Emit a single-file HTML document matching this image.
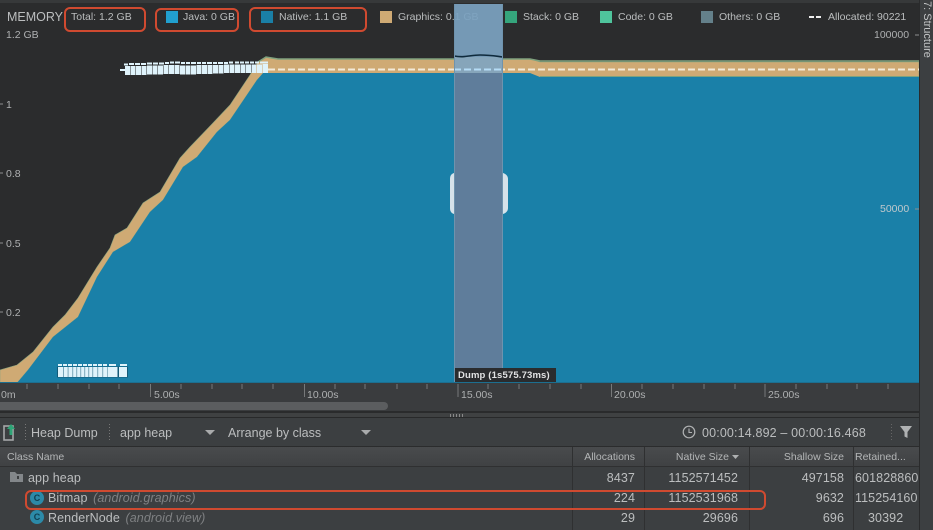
<!DOCTYPE html>
<html><head><meta charset="utf-8">
<style>
html,body{margin:0;padding:0;background:#2b2c2d;}
#r{position:relative;width:933px;height:530px;overflow:hidden;background:#2b2c2d;font-family:"Liberation Sans",sans-serif;color:#b4b6b7;}
.t{position:absolute;white-space:nowrap;line-height:14px;}
.b{position:absolute;}
.sw{position:absolute;top:11px;width:12px;height:12px;}
.l{font-size:10.5px;top:10px;color:#bbbdbe;}
.ax{font-size:10.5px;color:#aeb0b1;}
.row{font-size:12.5px;color:#bcbebf;letter-spacing:.1px;}
.n{text-align:right;}
.red{position:absolute;border:2.5px solid #d04a30;border-radius:5px;box-sizing:border-box;}
</style></head>
<body><div id="r">
<div class="b" style="left:0;top:0;width:933px;height:3px;background:#37393a;"></div>

<!-- legend (below the selection overlay) -->
<div class="t" style="left:7px;top:10px;font-size:12.5px;color:#bcbebf;">MEMORY</div>
<div class="t l" style="left:71px;">Total: 1.2 GB</div>
<div class="sw" style="left:166px;background:#21a0cf;"></div><div class="t l" style="left:183px;">Java: 0 GB</div>
<div class="sw" style="left:261px;background:#1a7fa6;"></div><div class="t l" style="left:279px;">Native: 1.1 GB</div>
<div class="sw" style="left:380px;background:#cfaa74;"></div><div class="t l" style="left:398px;">Graphics: 0.1 GB</div>
<div class="sw" style="left:505px;background:#35a57c;"></div><div class="t l" style="left:523px;">Stack: 0 GB</div>
<div class="sw" style="left:600px;background:#4fc49c;"></div><div class="t l" style="left:618px;">Code: 0 GB</div>
<div class="sw" style="left:701px;background:#64808a;"></div><div class="t l" style="left:719px;">Others: 0 GB</div>
<div class="b" style="left:809px;top:16px;width:5px;height:2px;background:#eee;"></div><div class="b" style="left:816px;top:16px;width:5px;height:2px;background:#eee;"></div>
<div class="t l" style="left:828px;">Allocated: 90221</div>

<svg class="b" style="left:0;top:0" width="933" height="420" viewBox="0 0 933 420">
<!-- tan -->
<path fill="#cfaa74" stroke="#8fa67f" stroke-width=".6" d="M0 370 L17 365 L33 352 L53 327 L65 315 L78 298 L97 267 L110 248 L115 235 L127 228 L143 203 L160 192 L180 158 L190 147 L213 123 L230 105 L250 75 L258 62 L266 57 L278 59 L530 59 L540 62 L919 62 L919 78 L540 78 L530 74 L263 74 L257 80 L230 120 L217 132 L197 157 L183 167 L163 200 L150 212 L130 242 L113 252 L97 277 L78 317 L53 337 L28 370 L17 383 L0 383Z"/>
<!-- green rim -->
<path fill="none" stroke="#7fa27e" stroke-width="1.5" d="M258 62 L266 57 L278 59 L530 59 L540 61 L919 61"/>
<path fill="none" stroke="#7fa27e" stroke-width="1" d="M540 76.5 L919 76.5"/>
<!-- blue -->
<path fill="#1a80a8" d="M17 383 L28 370 L53 337 L78 317 L97 277 L113 252 L130 242 L150 212 L163 200 L183 167 L197 157 L217 132 L230 120 L257 80 L263 73 L530 73 L540 77 L919 77 L919 383Z"/>
<!-- dashed -->
<line x1="268" y1="69.5" x2="919" y2="69.5" stroke="#f3ead8" stroke-width="2" stroke-dasharray="7 3"/>
<!-- selection -->
<rect x="454" y="4" width="49" height="53" fill="#7ba1bf" fill-opacity=".93"/>
<rect x="454" y="57" width="49" height="16" fill="#86a5ba"/>
<rect x="454" y="73" width="49" height="310" fill="#5f7d9b"/>
<line x1="454" y1="69.5" x2="503" y2="69.5" stroke="#b5dcf5" stroke-width="2" stroke-dasharray="7 3"/>
<path d="M454 56 C465 58 470 55 480 55 C490 55 495 56 503 57" fill="none" stroke="#0f2a3c" stroke-width="1.6"/>
<line x1="454.500" y1="4" x2="454.500" y2="383" stroke="#6f93ad" stroke-width="1"/>
<line x1="502.500" y1="4" x2="502.500" y2="383" stroke="#6f93ad" stroke-width="1"/>
<!-- handles -->
<path d="M454 173 C451 174 450 176 450 179 L450 208 C450 211 451 213 454 214Z" fill="#d6e2ea"/>
<path d="M503 173 C506 174 508 176 508 179 L508 208 C508 211 506 213 503 214Z" fill="#d6e2ea"/>
<!-- ticks on the y axis -->
<g stroke="#8c8e8f" stroke-width="1">
<line x1="0" y1="104" x2="3" y2="104"/><line x1="0" y1="173" x2="3" y2="173"/><line x1="0" y1="243" x2="3" y2="243"/><line x1="0" y1="312" x2="3" y2="312"/>
<line x1="915" y1="35" x2="919" y2="35"/><line x1="915" y1="209" x2="919" y2="209"/>
</g>
<!-- allocation markers top -->
<g fill="#dff3fb">
<rect x="120" y="69" width="5" height="2"/>
<rect x="125" y="66" width="5" height="9"/><rect x="130.500" y="66" width="5" height="9"/><rect x="136" y="66" width="5" height="9"/><rect x="141.500" y="66" width="5" height="9"/><rect x="147" y="65.500" width="5" height="9"/><rect x="152.500" y="65.500" width="5" height="9"/><rect x="158" y="65.500" width="5" height="9"/><rect x="163.500" y="65" width="5" height="9"/><rect x="169" y="65" width="5" height="9"/><rect x="174.500" y="65" width="5" height="9"/><rect x="180" y="65.500" width="5" height="9"/><rect x="185.500" y="65.500" width="5" height="9"/><rect x="191" y="65.500" width="5" height="9"/><rect x="196.500" y="65" width="5" height="9"/><rect x="202" y="65" width="5" height="9"/><rect x="207.500" y="65" width="5" height="9"/><rect x="213" y="65" width="5" height="8.500"/><rect x="218.500" y="65" width="5" height="8.500"/><rect x="224" y="64.500" width="5" height="8.500"/><rect x="229.500" y="64.500" width="5" height="8.500"/><rect x="235" y="64.500" width="5" height="8.500"/><rect x="240.500" y="64.500" width="5" height="8.500"/><rect x="246" y="64.500" width="5" height="8.500"/><rect x="251.500" y="64.500" width="5" height="8.500"/><rect x="257" y="64.500" width="5" height="8.500"/><rect x="262.500" y="64" width="5.500" height="9"/>
</g>
<g fill="#dff3fb">
<rect x="124" y="63.500" width="4" height="2"/><rect x="129" y="63" width="5" height="2"/><rect x="135" y="63" width="5" height="2"/><rect x="141" y="63" width="5" height="2"/><rect x="147" y="62.500" width="5" height="2"/><rect x="153" y="62.500" width="5" height="2"/><rect x="159" y="62.500" width="5" height="2"/><rect x="165" y="62" width="4" height="2"/><rect x="170" y="61.500" width="4" height="2"/><rect x="175" y="61.500" width="5" height="2"/><rect x="181" y="62" width="4" height="2"/><rect x="186" y="62" width="4" height="2"/><rect x="191" y="62" width="5" height="2"/><rect x="197" y="62" width="4" height="2"/><rect x="202" y="62" width="4" height="2"/><rect x="207" y="62" width="5" height="2"/><rect x="213" y="62" width="4" height="2"/><rect x="218" y="62" width="5" height="2"/><rect x="224" y="62" width="4" height="2"/><rect x="229" y="61.500" width="4" height="2"/><rect x="235" y="61.500" width="4" height="2"/><rect x="240" y="61.500" width="4" height="2"/><rect x="245" y="61.500" width="4" height="2"/><rect x="250" y="61.500" width="4" height="2"/><rect x="255" y="61.500" width="4" height="2"/><rect x="260" y="61.500" width="8" height="2"/>
</g>
<!-- allocation markers bottom -->
<rect x="57" y="366.500" width="71" height="11" fill="#135a78"/>
<g fill="#dff3fb">
<rect x="58" y="367" width="5" height="10"/><rect x="63.500" y="367" width="4.300" height="10"/><rect x="68.300" y="367" width="4.300" height="10"/><rect x="73.100" y="367" width="3.500" height="10"/><rect x="77.100" y="367" width="3.500" height="10"/><rect x="81.100" y="367" width="3.500" height="10"/><rect x="85.100" y="367" width="3.500" height="10"/><rect x="89.100" y="367" width="3.500" height="10"/><rect x="93.100" y="367" width="4.500" height="10"/><rect x="98.100" y="367" width="4.500" height="10"/><rect x="103.100" y="367" width="4.500" height="10"/><rect x="108" y="367" width="9.500" height="10"/><rect x="119" y="367" width="8" height="10"/>
</g>
<g fill="#dff3fb"><rect x="58" y="364" width="4" height="2"/><rect x="63" y="364" width="4" height="2"/><rect x="68" y="364" width="4" height="2"/><rect x="73" y="364" width="4" height="2"/><rect x="78" y="364" width="4" height="2"/><rect x="83" y="364" width="4" height="2"/><rect x="88" y="364" width="4" height="2"/><rect x="93" y="364" width="4" height="2"/><rect x="98" y="364" width="4" height="2"/><rect x="103" y="364" width="4" height="2"/><rect x="109" y="364" width="7" height="2"/><rect x="120" y="364" width="7" height="2"/></g>
</svg>

<!-- axis labels -->
<div class="t ax" style="left:6px;top:28px;">1.2 GB</div>
<div class="t ax" style="left:6px;top:98px;">1</div>
<div class="t ax" style="left:6px;top:167px;">0.8</div>
<div class="t ax" style="left:6px;top:237px;">0.5</div>
<div class="t ax" style="left:6px;top:306px;">0.2</div>
<div class="t ax" style="left:874px;top:28px;">100000</div>
<div class="t ax" style="left:880px;top:202px;color:#c0c8cc;">50000</div>

<!-- dump label -->
<div class="b" style="left:455px;top:368px;width:101px;height:15px;background:#2a2c2e;"></div>
<div class="t" style="left:458px;top:369px;font-size:9.5px;font-weight:bold;color:#e2e3e4;letter-spacing:.15px;">Dump (1s575.73ms)</div>

<!-- time ruler -->
<div class="b" style="left:0;top:383px;width:919px;height:37px;background:#3a3c3e;"></div>
<div class="b" style="left:0;top:382px;width:919px;height:1px;background:#1c6f90;"></div>
<svg class="b" style="left:0;top:383px" width="919" height="17">
<g stroke="#77797a" stroke-width="1">
<path d="M27 1v5M58 1v5M89 1v5M119 1v5M181 1v5M212 1v5M242 1v5M273 1v5M335 1v5M365 1v5M397 1v5M427 1v5M488 1v5M519 1v5M550 1v5M581 1v5M642 1v5M673 1v5M704 1v5M735 1v5M796 1v5M827 1v5M857 1v5M888 1v5"/>
<path d="M150.500 1v13M304.500 1v13M458 1v13M611.500 1v13M765 1v13"/>
</g></svg>
<div class="t ax" style="left:1px;top:388px;">0m</div>
<div class="t ax" style="left:154px;top:388px;">5.00s</div>
<div class="t ax" style="left:307px;top:388px;">10.00s</div>
<div class="t ax" style="left:461px;top:388px;">15.00s</div>
<div class="t ax" style="left:614px;top:388px;">20.00s</div>
<div class="t ax" style="left:768px;top:388px;">25.00s</div>

<!-- scrollbar -->
<div class="b" style="left:0;top:402px;width:388px;height:8px;background:#5b5d5f;border-radius:0 4px 4px 0;"></div>
<div class="b" style="left:0;top:411px;width:919px;height:2px;background:#2a2b2c;"></div>
<div class="b" style="left:0;top:413px;width:919px;height:4px;background:#3f4142;"></div>
<div class="b" style="left:0;top:417px;width:919px;height:1px;background:#28292a;"></div>
<div class="b" style="left:450px;top:414px;width:14px;height:3px;background:repeating-linear-gradient(90deg,#888 0 1px,transparent 1px 3px);"></div>

<!-- toolbar -->
<div class="b" style="left:0;top:418px;width:919px;height:29px;background:#3c3f41;"></div>
<div class="b" style="left:0;top:446px;width:919px;height:1px;background:#2b2c2d;"></div>
<svg class="b" style="left:2px;top:423px" width="16" height="20">
<rect x="2" y="3" width="9" height="14" fill="none" stroke="#a5a7a8" stroke-width="1.600"/>
<path d="M9 1l4 5h-2.500v6h-3V6H5z" fill="#2fa577"/>
</svg>
<div class="b" style="left:25px;top:424px;width:1px;height:17px;background:repeating-linear-gradient(#777 0 1px,transparent 1px 3px);"></div>
<div class="t" style="left:31px;top:426px;font-size:12.5px;color:#bcbebf;">Heap Dump</div>
<div class="b" style="left:109px;top:424px;width:1px;height:17px;background:repeating-linear-gradient(#777 0 1px,transparent 1px 3px);"></div>
<div class="t" style="left:120px;top:426px;font-size:12.5px;color:#bcbebf;">app heap</div>
<svg class="b" style="left:205px;top:429px" width="11" height="7"><path d="M0 1h10L5 6z" fill="#a9abac"/></svg>
<div class="t" style="left:228px;top:426px;font-size:12.5px;color:#bcbebf;">Arrange by class</div>
<svg class="b" style="left:361px;top:429px" width="11" height="7"><path d="M0 1h10L5 6z" fill="#a9abac"/></svg>
<svg class="b" style="left:682px;top:425px" width="14" height="14"><circle cx="7" cy="7" r="5.800" fill="none" stroke="#b0b2b3" stroke-width="1.200"/><path d="M7 3.500V7.500H10" fill="none" stroke="#b0b2b3" stroke-width="1.100"/></svg>
<div class="t" style="left:702px;top:426px;font-size:12.5px;color:#bcbebf;letter-spacing:.15px;">00:00:14.892 – 00:00:16.468</div>
<div class="b" style="left:891px;top:424px;width:1px;height:17px;background:repeating-linear-gradient(#666 0 1px,transparent 1px 3px);"></div>
<svg class="b" style="left:899px;top:425px" width="14" height="14"><path d="M1 1h12L8.500 7v6L5.500 11.500V7z" fill="#afb1b2"/></svg>

<!-- table header -->
<div class="b" style="left:0;top:447px;width:919px;height:20px;background:linear-gradient(#494b4d,#3f4143);"></div>
<div class="b" style="left:0;top:466px;width:919px;height:1px;background:#2f3031;"></div>
<div class="t" style="left:7px;top:450px;font-size:10.5px;color:#b4b6b7;">Class Name</div>
<div class="t n" style="right:298px;top:450px;font-size:10.5px;color:#b4b6b7;">Allocations</div>
<div class="t n" style="right:204px;top:450px;font-size:10.5px;color:#b4b6b7;">Native Size</div>
<svg class="b" style="left:732px;top:454px" width="8" height="6"><path d="M0 1h7L3.500 5z" fill="#aeb0b1"/></svg>
<div class="t n" style="right:89px;top:450px;font-size:10.5px;color:#b4b6b7;">Shallow Size</div>
<div class="t" style="left:855px;top:450px;font-size:10.5px;color:#b4b6b7;">Retained...</div>

<!-- rows -->
<div class="b" style="left:0;top:467px;width:919px;height:63px;background:#3c3f41;"></div>
<svg class="b" style="left:9px;top:471px" width="16" height="12"><path d="M1 1h5l2 2h6v8H1z" fill="#83878a"/><rect x="8" y="5" width="2" height="3" fill="#3c3f41"/></svg>
<div class="t row" style="left:28px;top:471px;">app heap</div>
<div class="b" style="left:30px;top:491px;width:14px;height:14px;border-radius:50%;background:#2c8aa8;color:#0f3f52;font-size:9px;line-height:14px;text-align:center;font-weight:bold;">C</div>
<div class="t row" style="left:48px;top:491px;">Bitmap <i style="color:#7f8183;margin-left:2px;">(android.graphics)</i></div>
<div class="b" style="left:30px;top:510px;width:14px;height:14px;border-radius:50%;background:#2c8aa8;color:#0f3f52;font-size:9px;line-height:14px;text-align:center;font-weight:bold;">C</div>
<div class="t row" style="left:48px;top:511px;">RenderNode <i style="color:#7f8183;margin-left:2px;">(android.view)</i></div>

<div class="t row n" style="right:298px;top:471px;">8437</div>
<div class="t row n" style="right:195px;top:471px;">1152571452</div>
<div class="t row n" style="right:89px;top:471px;">497158</div>
<div class="b" style="left:855px;top:471px;width:64px;height:16px;overflow:hidden;"><span class="t row">601828860</span></div>
<div class="t row n" style="right:298px;top:491px;">224</div>
<div class="t row n" style="right:195px;top:491px;">1152531968</div>
<div class="t row n" style="right:89px;top:491px;">9632</div>
<div class="b" style="left:855px;top:491px;width:64px;height:16px;overflow:hidden;"><span class="t row">115254160</span></div>
<div class="t row n" style="right:298px;top:511px;">29</div>
<div class="t row n" style="right:195px;top:511px;">29696</div>
<div class="t row n" style="right:89px;top:511px;">696</div>
<div class="t row" style="left:868px;top:511px;">30392</div>

<!-- column separators -->
<div class="b" style="left:572px;top:447px;width:1px;height:83px;background:#2f3031;"></div>
<div class="b" style="left:644px;top:447px;width:1px;height:83px;background:#2f3031;"></div>
<div class="b" style="left:749px;top:447px;width:1px;height:83px;background:#2f3031;"></div>
<div class="b" style="left:853px;top:447px;width:1px;height:83px;background:#2f3031;"></div>

<!-- side strip -->
<div class="b" style="left:919px;top:0;width:14px;height:530px;background:#3c3f41;border-left:1px solid #2a2b2c;box-sizing:border-box;"></div>
<div class="t" style="left:921px;top:1px;font-size:11px;color:#c4c6c7;writing-mode:vertical-rl;line-height:12px;">7: Structure</div>

<!-- red annotations -->
<div class="red" style="left:64px;top:7px;width:82px;height:25px;border-radius:6px;"></div>
<div class="red" style="left:155px;top:8px;width:84px;height:24px;border-radius:6px;"></div>
<div class="red" style="left:249px;top:7px;width:118px;height:25px;border-radius:6px;"></div>
<div class="red" style="left:25px;top:490px;width:741px;height:20px;border-radius:6px;"></div>
</div></body></html>
